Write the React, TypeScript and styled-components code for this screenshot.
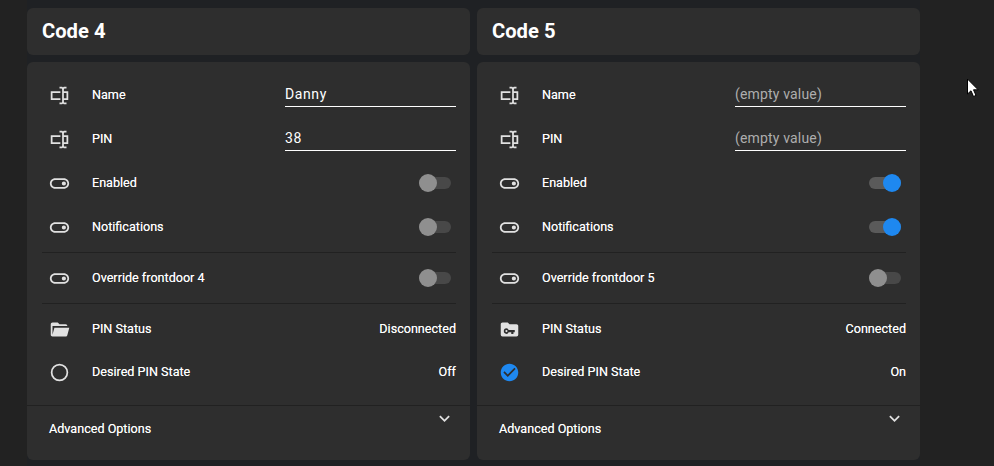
import React from 'react';
import styled, { createGlobalStyle } from 'styled-components';

const GlobalStyle = createGlobalStyle`
  html, body {
    margin: 0;
    height: 100%;
    overflow: hidden;
    background: #222222;
    font-family: Roboto, "Liberation Sans", sans-serif;
    color: #ffffff;
  }
`;

const Page = styled.div`
  position: relative;
  width: 994px;
  height: 466px;
  overflow: hidden;
  display: flex;
`;

const Gutter = styled.div`
  width: 27px;
  flex: none;
`;

const Board = styled.div`
  width: 893px;
  height: 466px;
  flex: none;
  box-sizing: border-box;
  padding-top: 8px;
  display: flex;
  gap: 7px;
  background: #1f2124;
`;

const Column = styled.div`
  width: 443px;
  flex: none;
  display: flex;
  flex-direction: column;
  gap: 7px;
`;

const Card = styled.div`
  background: #2e2e2e;
  border-radius: 6px;
`;

const TitleCard = styled(Card)`
  height: 47px;
  box-sizing: border-box;
  padding: 0 0 1px 15px;
  display: flex;
  align-items: center;
`;

const Title = styled.h1`
  margin: 0;
  font-size: 20.2px;
  font-weight: 700;
  color: #ffffff;
`;

const BodyCard = styled(Card)`
  height: 398px;
  display: flex;
  flex-direction: column;
`;

const Section = styled.div<{ $top: number; $bottom: number }>`
  padding: ${({ $top }) => $top}px 14px ${({ $bottom }) => $bottom}px 15px;
`;

const Divider = styled.div`
  height: 1px;
  margin: 0 14px 0 15px;
  background: #212121;
`;

const FullDivider = styled.div`
  height: 1px;
  background: #212121;
`;

const Row = styled.div<{ $height?: number }>`
  height: ${({ $height }) => $height ?? 44}px;
  display: flex;
  align-items: center;
`;

const IconSlot = styled.div`
  width: 35px;
  height: 21px;
  flex: none;
  margin: 2px 15px 0 0;
  display: flex;
  align-items: center;
  justify-content: center;
`;

const Label = styled.div`
  flex: 1;
  padding-top: 1px;
  font-size: 12.6px;
  color: #ffffff;
  text-shadow: 0 0 0.4px rgba(255, 255, 255, 0.7);
`;

const Value = styled.div`
  padding-top: 1px;
  font-size: 12.6px;
  color: #ffffff;
  text-shadow: 0 0 0.4px rgba(255, 255, 255, 0.7);
`;

const Field = styled.div<{ $empty?: boolean }>`
  width: 171px;
  height: 25px;
  box-sizing: border-box;
  border-bottom: 1px solid #ffffff;
  padding-top: 2px;
  font-size: 14px;
  line-height: 21px;
  letter-spacing: ${({ $empty }) => ($empty ? '0.17px' : '0.6px')};
  color: ${({ $empty }) => ($empty ? '#adadad' : '#ffffff')};
`;

const Toggle = styled.div<{ $on?: boolean }>`
  position: relative;
  width: 32px;
  height: 12px;
  margin: 2px 5px 0 0;
  border-radius: 6px;
  background: ${({ $on }) => ($on ? '#5a5a5a' : '#484848')};
`;

const Thumb = styled.div<{ $on?: boolean }>`
  position: absolute;
  top: -3px;
  left: ${({ $on }) => ($on ? '14px' : '0')};
  width: 18px;
  height: 18px;
  border-radius: 50%;
  background: ${({ $on }) => ($on ? '#1e88f0' : '#8f8f8f')};
`;

const Advanced = styled.div`
  flex: 1;
  position: relative;
  padding: 16px 0 0 22px;
  font-size: 12.6px;
  line-height: 14px;
  color: #ffffff;
  text-shadow: 0 0 0.4px rgba(255, 255, 255, 0.7);
`;

const Chevron = styled.svg`
  position: absolute;
  top: 2px;
  right: 15px;
  width: 21px;
  height: 21px;
  fill: #e1e1e1;
`;

const Cursor = styled.svg`
  position: absolute;
  left: 966px;
  top: 78px;
  width: 14px;
  height: 20px;
`;

const Glyph = ({ d, color = '#e1e1e1' }: { d: string; color?: string }) => (
  <svg width="21" height="21" viewBox="0 0 24 24" fill={color}>
    <path d={d} />
  </svg>
);

const TEXTBOX = 'M17,7H22V17H17V19A1,1 0 0,0 18,20H20V22H17.5C16.95,22 16,21.55 16,21C16,21.55 15.05,22 14.5,22H12V20H14A1,1 0 0,0 15,19V5A1,1 0 0,0 14,4H12V2H14.5C15.05,2 16,2.45 16,3C16,2.45 16.95,2 17.5,2H20V4H18A1,1 0 0,0 17,5V7M2,7H13V9H4V15H13V17H2V7M20,15V9H17V15H20Z';
const SWITCH = 'M17 6H7c-3.31 0-6 2.69-6 6s2.69 6 6 6h10c3.31 0 6-2.69 6-6s-2.69-6-6-6zm0 10H7c-2.21 0-4-1.79-4-4s1.79-4 4-4h10c2.21 0 4 1.79 4 4s-1.79 4-4 4zM17 9.6a2.4 2.4 0 1 0 0 4.8a2.4 2.4 0 1 0 0-4.8z';
const FOLDER_OPEN = 'M19,20H4C2.89,20 2,19.1 2,18V6C2,4.89 2.89,4 4,4H10L12,6H19A2,2 0 0,1 21,8H21L4,8V18L6.14,10H23.21L20.93,18.5C20.7,19.37 19.92,20 19,20Z';
const FOLDER_KEY = 'M10,4H4C2.89,4 2,4.89 2,6V18A2,2 0 0,0 4,20H20A2,2 0 0,0 22,18V8C22,6.89 21.1,6 20,6H12L10,4M8.5,10.5A2.5,2.5 0 0,1 10.95,12.5H18V15H16.5V17H14V15H10.95A2.5,2.5 0 0,1 8.5,17A3.25,3.25 0 0,1 5.5,13.75A3.25,3.25 0 0,1 8.5,10.5M8.5,12.5A1.25,1.25 0 0,0 7.25,13.75A1.25,1.25 0 0,0 8.5,15A1.25,1.25 0 0,0 9.75,13.75A1.25,1.25 0 0,0 8.5,12.5Z';
const CIRCLE = 'M12,20A8,8 0 0,1 4,12A8,8 0 0,1 12,4A8,8 0 0,1 20,12A8,8 0 0,1 12,20M12,2A10,10 0 0,0 2,12A10,10 0 0,0 12,22A10,10 0 0,0 22,12A10,10 0 0,0 12,2Z';
const CHECK_CIRCLE = 'M12 2C6.5 2 2 6.5 2 12S6.5 22 12 22 22 17.5 22 12 17.5 2 12 2M10 17L5 12L6.41 10.59L10 14.17L17.59 6.58L19 8L10 17Z';
const CHEVRON = 'M7.41,8.58L12,13.17L16.59,8.58L18,10L12,16L6,10L7.41,8.58Z';

type Code = {
  id: number;
  name: string;
  pin: string;
  enabled: boolean;
  notifications: boolean;
  status: string;
  desired: string;
};

const CODES: Code[] = [
  { id: 4, name: 'Danny', pin: '38', enabled: false, notifications: false, status: 'Disconnected', desired: 'Off' },
  { id: 5, name: '', pin: '', enabled: true, notifications: true, status: 'Connected', desired: 'On' },
];

const TextRow = ({ label, value }: { label: string; value: string }) => (
  <Row>
    <IconSlot><Glyph d={TEXTBOX} /></IconSlot>
    <Label>{label}</Label>
    <Field $empty={!value}>{value || '(empty value)'}</Field>
  </Row>
);

const SwitchRow = ({ label, on }: { label: string; on?: boolean }) => (
  <Row>
    <IconSlot><Glyph d={SWITCH} /></IconSlot>
    <Label>{label}</Label>
    <Toggle $on={on}><Thumb $on={on} /></Toggle>
  </Row>
);

const CodeColumn = ({ code }: { code: Code }) => {
  const connected = code.status === 'Connected';
  const isOn = code.desired === 'On';
  return (
    <Column>
      <TitleCard><Title>Code {code.id}</Title></TitleCard>
      <BodyCard>
        <Section $top={10} $bottom={4}>
          <TextRow label="Name" value={code.name} />
          <TextRow label="PIN" value={code.pin} />
          <SwitchRow label="Enabled" on={code.enabled} />
          <SwitchRow label="Notifications" on={code.notifications} />
        </Section>
        <Divider />
        <Section $top={2} $bottom={4}>
          <SwitchRow label={`Override frontdoor ${code.id}`} />
        </Section>
        <Divider />
        <Section $top={2} $bottom={13}>
          <Row>
            <IconSlot><Glyph d={connected ? FOLDER_KEY : FOLDER_OPEN} /></IconSlot>
            <Label>PIN Status</Label>
            <Value>{code.status}</Value>
          </Row>
          <Row $height={42}>
            <IconSlot>
              <Glyph d={isOn ? CHECK_CIRCLE : CIRCLE} color={isOn ? '#1e88f0' : '#e1e1e1'} />
            </IconSlot>
            <Label>Desired PIN State</Label>
            <Value>{code.desired}</Value>
          </Row>
        </Section>
        <FullDivider />
        <Advanced>
          Advanced Options
          <Chevron viewBox="0 0 24 24"><path d={CHEVRON} /></Chevron>
        </Advanced>
      </BodyCard>
    </Column>
  );
};

export default function App() {
  return (
    <Page>
      <GlobalStyle />
      <Gutter />
      <Board>
        {CODES.map((code) => <CodeColumn key={code.id} code={code} />)}
      </Board>
      <Cursor viewBox="0 0 14 20">
        <path d="M1.5 1V16L5 12.8L7.5 18.5L10 17.4L7.5 11.8H12.2Z" fill="#ffffff" stroke="#000000" strokeWidth="1" />
      </Cursor>
    </Page>
  );
}
